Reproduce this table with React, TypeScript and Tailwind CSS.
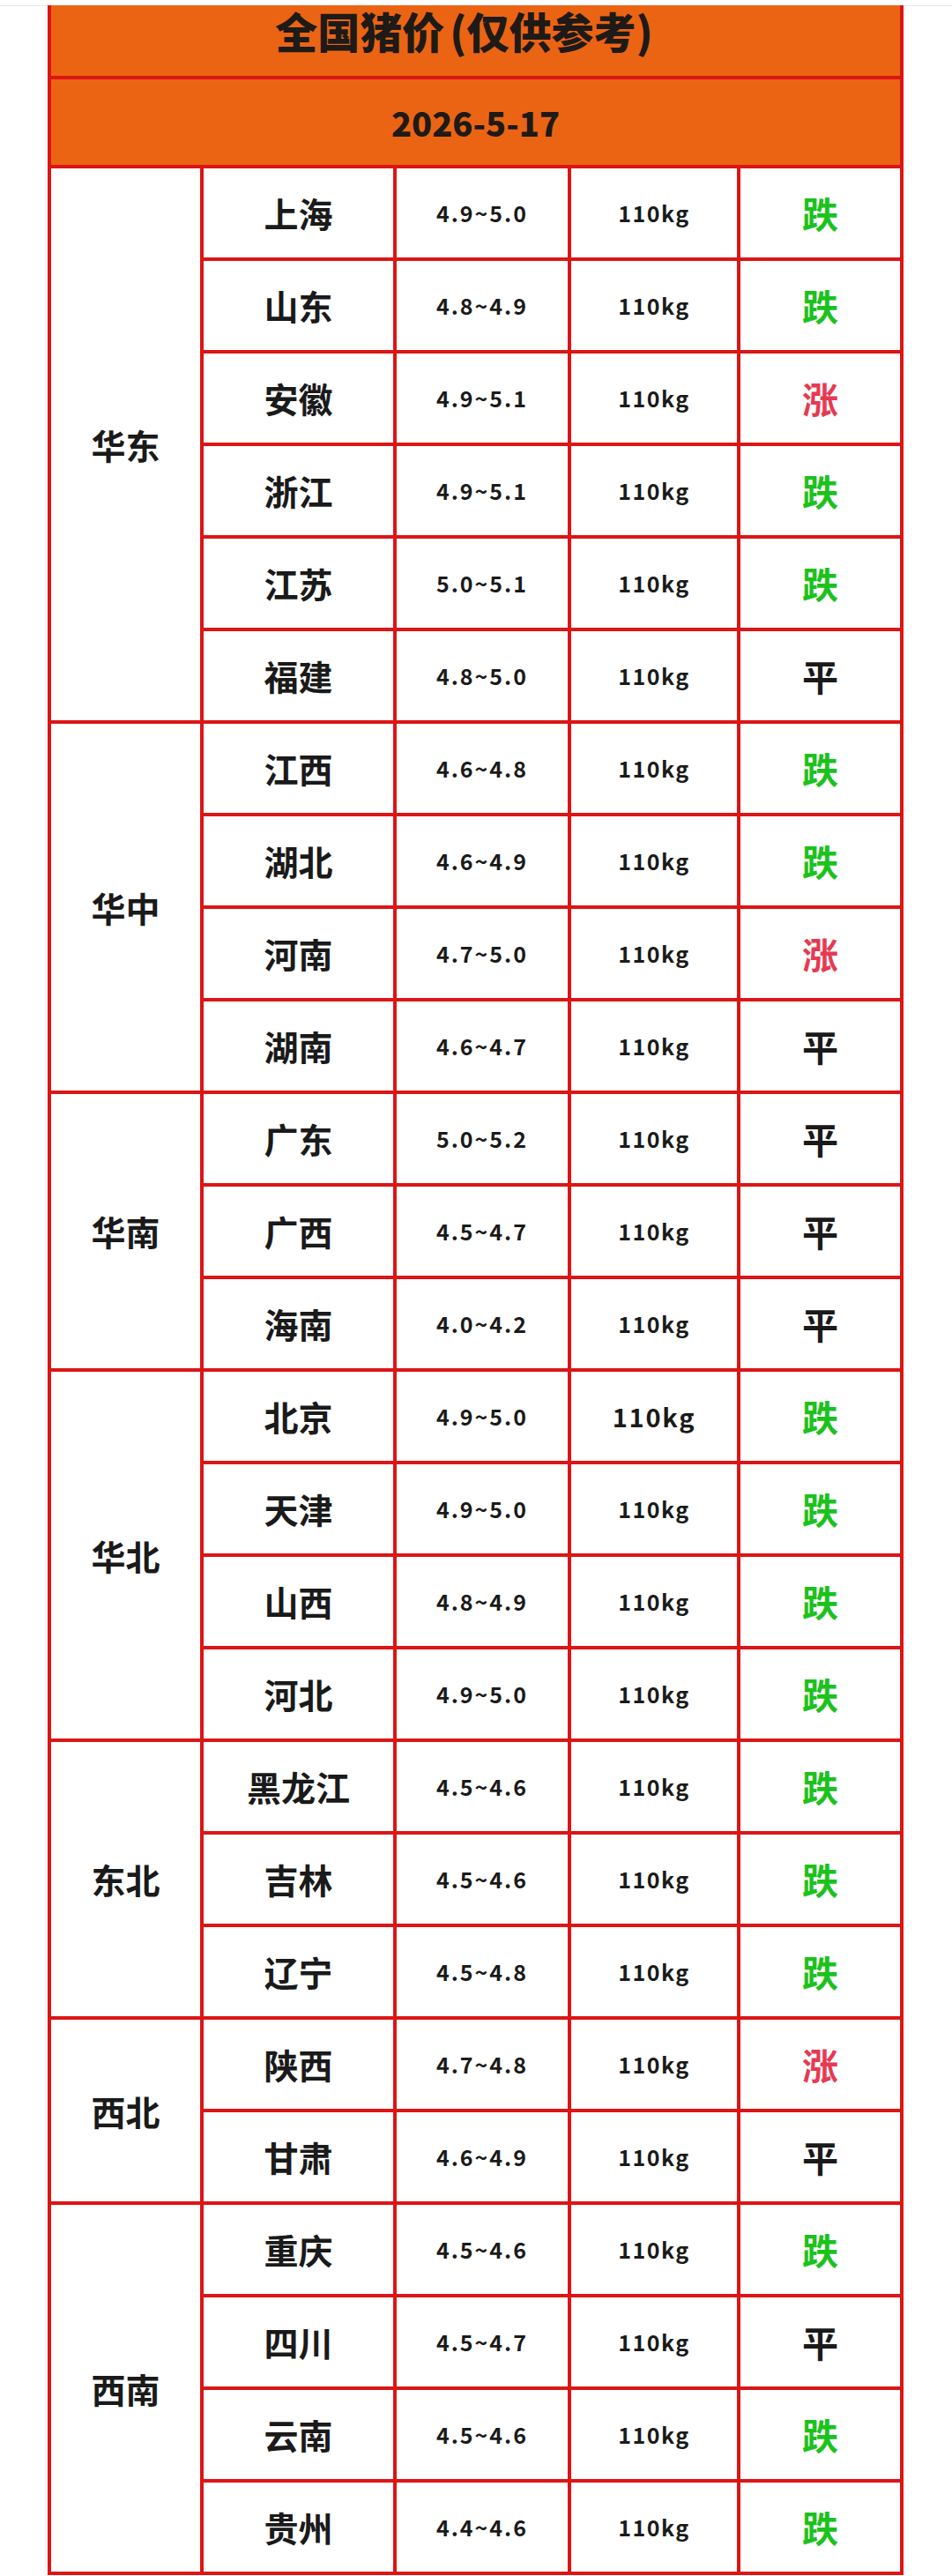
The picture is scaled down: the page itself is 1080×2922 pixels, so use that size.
type Trend = "up" | "down" | "flat"

interface Row {
  name: string
  price: string
  weight: string
  trend: Trend
  big?: boolean
}

interface Region {
  name: string
  span: string
  rows: Row[]
}

const REGIONS: Region[] = [
  {
    name: "华东",
    span: "row-span-6",
    rows: [
      { name: "上海", price: "4.9~5.0", weight: "110kg", trend: "down" },
      { name: "山东", price: "4.8~4.9", weight: "110kg", trend: "down" },
      { name: "安徽", price: "4.9~5.1", weight: "110kg", trend: "up" },
      { name: "浙江", price: "4.9~5.1", weight: "110kg", trend: "down" },
      { name: "江苏", price: "5.0~5.1", weight: "110kg", trend: "down" },
      { name: "福建", price: "4.8~5.0", weight: "110kg", trend: "flat" },
    ],
  },
  {
    name: "华中",
    span: "row-span-4",
    rows: [
      { name: "江西", price: "4.6~4.8", weight: "110kg", trend: "down" },
      { name: "湖北", price: "4.6~4.9", weight: "110kg", trend: "down" },
      { name: "河南", price: "4.7~5.0", weight: "110kg", trend: "up" },
      { name: "湖南", price: "4.6~4.7", weight: "110kg", trend: "flat" },
    ],
  },
  {
    name: "华南",
    span: "row-span-3",
    rows: [
      { name: "广东", price: "5.0~5.2", weight: "110kg", trend: "flat" },
      { name: "广西", price: "4.5~4.7", weight: "110kg", trend: "flat" },
      { name: "海南", price: "4.0~4.2", weight: "110kg", trend: "flat" },
    ],
  },
  {
    name: "华北",
    span: "row-span-4",
    rows: [
      { name: "北京", price: "4.9~5.0", weight: "110kg", trend: "down", big: true },
      { name: "天津", price: "4.9~5.0", weight: "110kg", trend: "down" },
      { name: "山西", price: "4.8~4.9", weight: "110kg", trend: "down" },
      { name: "河北", price: "4.9~5.0", weight: "110kg", trend: "down" },
    ],
  },
  {
    name: "东北",
    span: "row-span-3",
    rows: [
      { name: "黑龙江", price: "4.5~4.6", weight: "110kg", trend: "down" },
      { name: "吉林", price: "4.5~4.6", weight: "110kg", trend: "down" },
      { name: "辽宁", price: "4.5~4.8", weight: "110kg", trend: "down" },
    ],
  },
  {
    name: "西北",
    span: "row-span-2",
    rows: [
      { name: "陕西", price: "4.7~4.8", weight: "110kg", trend: "up" },
      { name: "甘肃", price: "4.6~4.9", weight: "110kg", trend: "flat" },
    ],
  },
  {
    name: "西南",
    span: "row-span-4",
    rows: [
      { name: "重庆", price: "4.5~4.6", weight: "110kg", trend: "down" },
      { name: "四川", price: "4.5~4.7", weight: "110kg", trend: "flat" },
      { name: "云南", price: "4.5~4.6", weight: "110kg", trend: "down" },
      { name: "贵州", price: "4.4~4.6", weight: "110kg", trend: "down" },
    ],
  },
]

const TREND_TEXT: Record<Trend, string> = { up: "涨", down: "跌", flat: "平" }
const TREND_COLOR: Record<Trend, string> = {
  up: "text-[#e63a52]",
  down: "text-[#1cc21c]",
  flat: "text-[#1a1a1a]",
}

const cell = "flex items-center justify-center bg-white"

export default function App() {
  return (
    <div className="min-h-[2922px] bg-white font-['Noto_Sans_CJK_SC','Noto_Sans',sans-serif] text-[#1a1a1a]">
      {/* thin page divider above the table */}
      <div className="h-[7px] border-b border-[#e6e6e6]" />

      <div className="-mt-px ml-[54px] grid w-[971px] grid-cols-[169px_215px_194px_188px_181px] grid-rows-[80px_97px] auto-rows-[101px] gap-[4px] bg-[#dc1515] px-[4px] pb-[4px]">
        {/* Header */}
        <div className="col-span-5 flex items-center justify-center bg-[#eb6414] pb-[24px] pr-[26px] text-[48px] font-black leading-none text-[#1e1a17]">
          全国猪价<span className="ml-[6px]">(</span>仅供参考)
        </div>
        <div className="col-span-5 flex items-center justify-center bg-[#eb6414] text-[38px] font-black leading-none text-[#1e1a17]">
          2026-5-17
        </div>

        {REGIONS.map((region) => [
          <div key={region.name} className={`${cell} col-start-1 ${region.span} text-[39px] font-bold`}>
            {region.name}
          </div>,
          ...region.rows.map((row) => [
            <div key={row.name + "-n"} className={`${cell} col-start-2 text-[39px] font-bold`}>
              {row.name}
            </div>,
            <div key={row.name + "-p"} className={`${cell} text-[25px] font-bold tracking-[0.08em]`}>
              {row.price}
            </div>,
            <div
              key={row.name + "-w"}
              className={`${cell} font-bold tracking-[0.06em] ${row.big ? "text-[29px]" : "text-[25px]"}`}
            >
              {row.weight}
            </div>,
            <div key={row.name + "-t"} className={`${cell} text-[41px] font-bold ${TREND_COLOR[row.trend]}`}>
              {TREND_TEXT[row.trend]}
            </div>,
          ]),
        ])}
      </div>
    </div>
  )
}
